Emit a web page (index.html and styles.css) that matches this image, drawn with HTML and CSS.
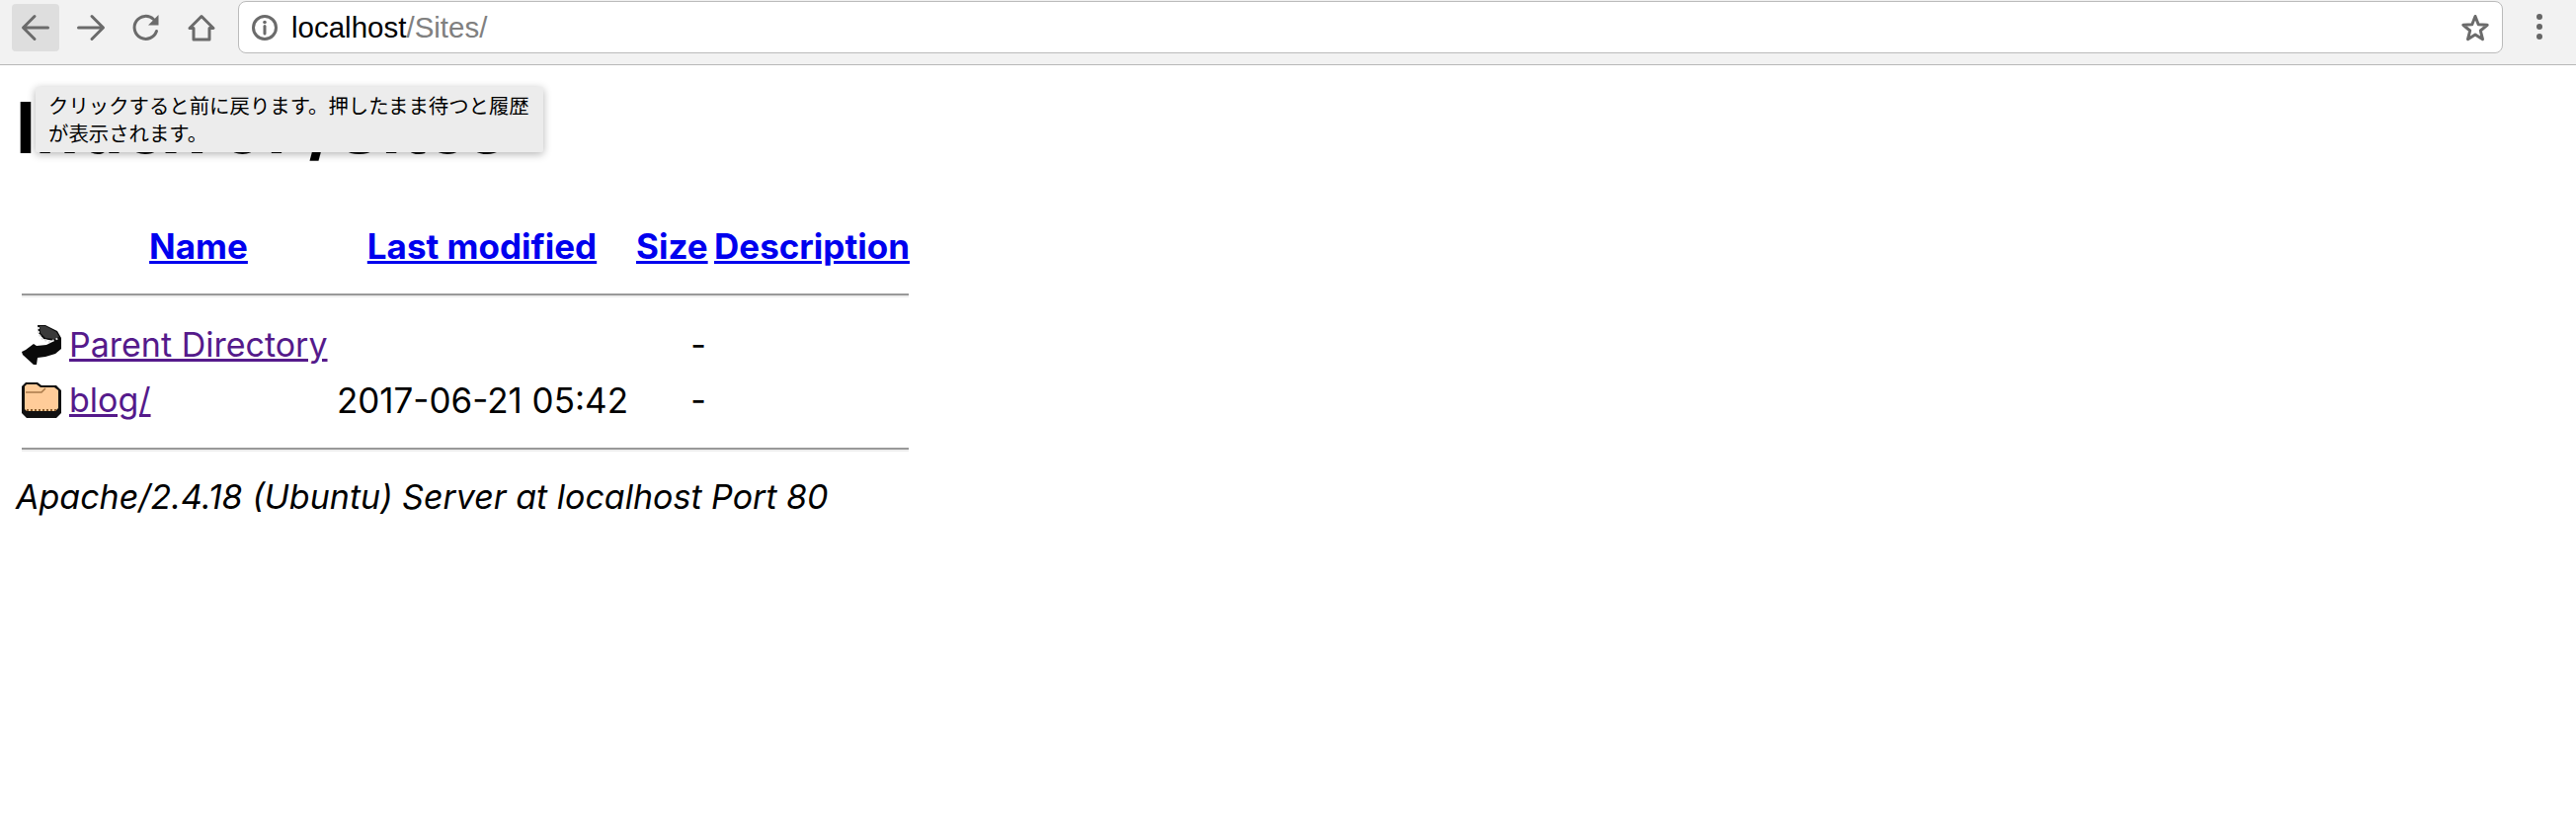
FILE: index.html
```html
<!DOCTYPE html>
<html lang="ja">
<head>
    <meta charset="UTF-8">
    <title>Index of /Sites</title>
    <link rel="stylesheet" href="styles.css">
</head>
<body>
    <div class="toolbar">
        <div class="nav-buttons">
            <div class="nav-btn active">
                <svg width="30" height="30" viewBox="0 0 30 30"><path d="M27.500 15H3.500M14 3.500L2.500 15 14 26.500" class="ico-line"/></svg>
            </div>
            <div class="nav-btn">
                <svg width="30" height="30" viewBox="0 0 30 30"><path d="M2.500 15H26.500M16 3.500L27.500 15 16 26.500" class="ico-line"/></svg>
            </div>
            <div class="nav-btn">
                <svg width="30" height="30" viewBox="0 0 30 30"><path d="M25.500 18.500A11.500 11.500 0 1 1 22.500 6.500" class="ico-line"/><path d="M27.500 2V12.500H17Z" class="ico-fill"/></svg>
            </div>
            <div class="nav-btn">
                <svg width="30" height="30" viewBox="0 0 30 30"><path d="M3 15.500L15 3.500 27 15.500H23V27H7V15.500Z" class="ico-line"/></svg>
            </div>
        </div>
        <div class="omnibox">
            <svg class="info-icon" width="28" height="28" viewBox="0 0 28 28"><circle cx="14" cy="14" r="11.500" class="ico-line"/><path d="M14 12.500V20" class="ico-line"/><circle cx="14" cy="8.500" r="1.800" class="ico-fill"/></svg>
            <div class="url"><span class="host">localhost</span>/Sites/</div>
            <svg class="star-icon" width="30" height="30" viewBox="0 0 30 30"><path d="M15 3.500L18.200 11.700 27.200 12.300 20.300 18 22.500 26.700 15 22 7.500 26.700 9.700 18 2.800 12.300 11.800 11.700Z" class="ico-line"/></svg>
        </div>
        <div class="menu-dots"><span></span><span></span><span></span></div>
    </div>

    <div class="page">
        <h1>Index of /Sites</h1>
        <table class="listing">
            <tr class="head-row">
                <th class="col-icon"></th>
                <th class="col-name"><a href="#">Name</a></th>
                <th class="col-date"><a href="#">Last modified</a></th>
                <th class="col-size"><a href="#">Size</a></th>
                <th class="col-desc"><a href="#">Description</a></th>
            </tr>
            <tr class="rule-row"><th colspan="5"><hr></th></tr>
            <tr>
                <td>
                    <svg class="file-icon" width="40" height="42" viewBox="0 0 40 42">
                        <path d="M16 1L24 1 36 7 40 14 40 25 34 30 24 33 16 34 15 41 12 41 1 31 0 28 4 26 12 20 15 22 25 21 33 17 22 15 17 9Z" fill="#0a0a0a"/>
                        <path d="M18 2L24 2 35 8 38 13 33 15 24 14 19 9Z" fill="#3a3a3a"/>
                        <path d="M17 3V10L21 15 28 18 38 14" fill="none" stroke="#ddd" stroke-width="2" stroke-dasharray="2 2"/>
                    </svg>
                </td>
                <td><a class="visited" href="#">Parent Directory</a></td>
                <td class="right"></td>
                <td class="right">-</td>
                <td></td>
            </tr>
            <tr>
                <td>
                    <svg class="file-icon" width="40" height="36" viewBox="0 0 40 36">
                        <path d="M4 0H16L20 3H35L40 8V31L35 36H5L0 31V4Z" fill="#111"/>
                        <path d="M3 4L5 2H15L19 5H33L37 8V26L34 29H5L3 27Z" fill="#fc9"/>
                        <path d="M4 10H20L24 6" fill="none" stroke="#a87a4a" stroke-width="1.500"/>
                        <path d="M5 28H35" stroke="#8a5a2a" stroke-width="2" stroke-dasharray="2 2"/>
                    </svg>
                </td>
                <td><a class="visited" href="#">blog/</a></td>
                <td class="right date">2017-06-21 05:42</td>
                <td class="right">-</td>
                <td></td>
            </tr>
            <tr class="rule-row"><th colspan="5"><hr></th></tr>
        </table>
        <address>Apache/2.4.18 (Ubuntu) Server at localhost Port 80</address>
    </div>

    <div class="tooltip">クリックすると前に戻ります。押したまま待つと履歴が表示されます。</div>
</body>
</html>
```

FILE: styles.css
```css
body {
    margin: 0;
    background: #fff;
    color: #000;
    font-family: Inter, "Noto Sans CJK JP", sans-serif;
    overflow: hidden;
}

/* browser chrome */
.toolbar {
    display: flex;
    align-items: flex-start;
    height: 65px;
    background: #f2f2f2;
    border-bottom: 1px solid #b8b8b8;
}

.nav-buttons {
    display: flex;
    gap: 8px;
    margin: 4px 0 0 12px;
}

.nav-btn {
    width: 48px;
    height: 48px;
    display: flex;
    justify-content: center;
    align-items: center;
    border-radius: 4px;
}

.nav-btn.active {
    background: #dedede;
}

.ico-line {
    fill: none;
    stroke: #6b6b6b;
    stroke-width: 3;
    stroke-linecap: round;
    stroke-linejoin: round;
}

.ico-fill {
    fill: #6b6b6b;
}

.omnibox {
    display: flex;
    align-items: center;
    width: 2293px;
    height: 53px;
    margin: 1px 0 0 13px;
    background: #fff;
    border: 1px solid #bbb;
    border-radius: 8px;
    padding: 0 12px 0 12px;
    box-sizing: border-box;
}

.url {
    flex: 1;
    margin-left: 13px;
    font-family: "Liberation Sans", sans-serif;
    font-size: 29.500px;
    color: #808080;
}

.host {
    color: #000;
}

.menu-dots {
    display: flex;
    flex-direction: column;
    gap: 4px;
    margin: 14px 0 0 34px;
}

.menu-dots span {
    width: 6px;
    height: 6px;
    border-radius: 50%;
    background: #666;
}

/* directory listing */
.page {
    padding: 0 16px;
}

h1 {
    margin: 22px 0 49px;
    font-size: 71px;
    line-height: 82px;
    font-weight: bold;
}

.listing {
    border-spacing: 4px;
    font-size: 34px;
    table-layout: fixed;
    width: 910px;
}

.listing th, .listing td {
    padding: 2px;
    line-height: 48px;
    white-space: nowrap;
}

.listing th {
    font-size: 35px;
}

.listing td.date {
    font-size: 35px;
}

.listing a {
    color: #00e;
}

.listing a.visited {
    color: #551a8b;
}

.col-icon { width: 40px; }
.col-name { width: 262px; }
.col-date { width: 296px; }
.col-size { width: 71px; }
.col-desc { width: 197px; }

.right {
    text-align: right;
}

.file-icon {
    display: block;
}

.listing .rule-row th {
    line-height: 0;
}

hr {
    margin: 16px 0;
    height: 0;
    border: 0;
    border-top: 2px solid #999;
    border-bottom: 2px solid #eee;
}

address {
    margin-top: 0;
    font-size: 34px;
    line-height: 48px;
    font-style: italic;
}

/* tooltip over the heading */
.tooltip {
    position: absolute;
    left: 36px;
    top: 88px;
    width: 514px;
    height: 66px;
    box-sizing: border-box;
    padding: 4px 12px 4px 13px;
    background: #ececec;
    border-radius: 2px;
    box-shadow: 0 2px 8px rgba(0, 0, 0, 0.3);
    font-family: "Noto Sans CJK JP", sans-serif;
    font-size: 20.400px;
    line-height: 28px;
    color: #000;
}
```
